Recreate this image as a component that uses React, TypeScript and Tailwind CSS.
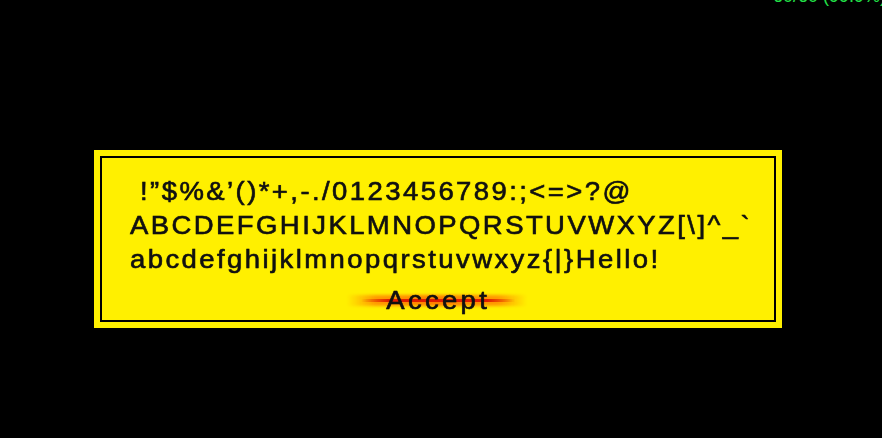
const lines = [
  " !”$%&’()*+,-./0123456789:;<=>?@",
  "ABCDEFGHIJKLMNOPQRSTUVWXYZ[\\]^_`",
  "abcdefghijklmnopqrstuvwxyz{|}Hello!",
];

export default function App() {
  return (
    <div className="relative h-[438px] w-full overflow-hidden bg-black font-['Liberation_Sans',Arial,sans-serif]">
      <div className="absolute left-[773px] top-[-13px] whitespace-nowrap text-[18px] leading-[18px] text-[#22e048]">
        60/60 (99.9%)
      </div>

      <div className="pl-[94px] pt-[150px]">
        <div className="h-[178px] w-[688px] bg-[#fff000] p-[6px]">
          <div className="flex h-full flex-col border-2 border-black pl-[28px] pt-[16px] text-[25px] leading-[34px] tracking-[2.2px] text-[#111] [-webkit-text-stroke:0.5px_#111] [text-shadow:0_0_1px_rgba(0,0,0,0.5)]">
            {lines.map((line) => (
              <p className="origin-left scale-x-[1.1] whitespace-pre" key={line}>
                {line}
              </p>
            ))}
            <div className="mt-[7px] flex justify-center pr-[28px]">
              <div className="relative">
                <div className="absolute left-[-44px] right-[-42px] top-[12px] h-[11px] bg-[linear-gradient(to_right,transparent,#ff9a00_16%,#ff8000_50%,#ff9a00_84%,transparent)] blur-[1.5px]" />
                <div className="absolute left-[-30px] right-[-30px] top-[16px] h-[3px] bg-[linear-gradient(to_right,transparent,#e01e00_18%,#e01e00_82%,transparent)] blur-[0.5px]" />
                <span className="relative inline-block scale-x-[1.1] tracking-[3px]">Accept</span>
              </div>
            </div>
          </div>
        </div>
      </div>
    </div>
  );
}
